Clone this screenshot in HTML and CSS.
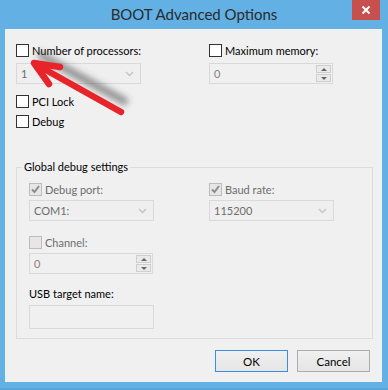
FILE: index.html
```html
<!DOCTYPE html>
<html lang="en">

<head>
    <meta charset="UTF-8">
    <meta name="viewport" content="width=device-width, initial-scale=1.0">
    <title>BOOT Advanced Options</title>
    <link rel="stylesheet" href="styles.css">
</head>

<body>
    <div class="window">
        <div class="titlebar">
            <span></span>
            <h1 class="title">BOOT Advanced Options</h1>
            <button class="close">
                <svg width="10" height="10" viewBox="0 0 10 10">
                    <path d="M1.5 1.5 L8.5 8.5 M8.5 1.5 L1.5 8.5" stroke="#fff" stroke-width="2" />
                </svg>
            </button>
        </div>

        <div class="client">
            <section class="top">
                <div class="col">
                    <label class="check"><span class="box"></span>Number of processors:</label>
                    <div class="combo"><span>1</span>
                        <svg class="chev" width="9" height="6" viewBox="0 0 9 6">
                            <path d="M1 1 L4.5 4.5 L8 1" fill="none" stroke="#c4c4c4" stroke-width="1.4" />
                        </svg>
                    </div>
                    <label class="check pci"><span class="box"></span>PCI Lock</label>
                    <label class="check debug"><span class="box"></span>Debug</label>
                </div>
                <div class="col">
                    <label class="check"><span class="box"></span>Maximum memory:</label>
                    <div class="spin"><span>0</span>
                        <div class="spin-btns">
                            <span class="spin-btn"><i class="tri up"></i></span>
                            <span class="spin-btn"><i class="tri down"></i></span>
                        </div>
                    </div>
                </div>
            </section>

            <fieldset class="group">
                <legend>Global debug settings</legend>
                <div class="group-grid">
                    <div class="col">
                        <label class="check off"><span class="box on">
                            <svg width="11" height="11" viewBox="0 0 11 11">
                                <path d="M2 5.5 L4.5 8 L9 2" fill="none" stroke="#8c8c8c" stroke-width="2" />
                            </svg></span>Debug port:</label>
                        <div class="combo"><span>COM1:</span>
                            <svg class="chev" width="9" height="6" viewBox="0 0 9 6">
                                <path d="M1 1 L4.5 4.5 L8 1" fill="none" stroke="#c4c4c4" stroke-width="1.4" />
                            </svg>
                        </div>
                        <label class="check off channel"><span class="box"></span>Channel:</label>
                        <div class="spin"><span>0</span>
                            <div class="spin-btns">
                                <span class="spin-btn"><i class="tri up"></i></span>
                                <span class="spin-btn"><i class="tri down"></i></span>
                            </div>
                        </div>
                        <div class="usb-label">USB target name:</div>
                        <div class="textbox"></div>
                    </div>
                    <div class="col">
                        <label class="check off"><span class="box on">
                            <svg width="11" height="11" viewBox="0 0 11 11">
                                <path d="M2 5.5 L4.5 8 L9 2" fill="none" stroke="#8c8c8c" stroke-width="2" />
                            </svg></span>Baud rate:</label>
                        <div class="combo"><span>115200</span>
                            <svg class="chev" width="9" height="6" viewBox="0 0 9 6">
                                <path d="M1 1 L4.5 4.5 L8 1" fill="none" stroke="#c4c4c4" stroke-width="1.4" />
                            </svg>
                        </div>
                    </div>
                </div>
            </fieldset>

            <div class="buttons">
                <button class="btn default">OK</button>
                <button class="btn">Cancel</button>
            </div>
        </div>

        <!-- annotation arrow drawn over the dialog -->
        <svg class="arrow" width="388" height="390" viewBox="0 0 388 390">
            <defs>
                <filter id="blur" x="-20%" y="-50%" width="140%" height="200%">
                    <feGaussianBlur stdDeviation="3" />
                </filter>
            </defs>
            <path d="M42 56 L124 101" stroke="rgba(70,70,70,0.55)" stroke-width="8" stroke-linecap="round" filter="url(#blur)" />
            <path d="M121 112 L37 65" stroke="#e8242b" stroke-width="6.5" stroke-linecap="round" />
            <path d="M60 67 L34 63 L49 84" fill="none" stroke="#e8242b" stroke-width="6.5" stroke-linecap="round" stroke-linejoin="round" />
        </svg>
    </div>
</body>

</html>
```

FILE: styles.css
```css
* {
    padding: 0;
    margin: 0;
    box-sizing: border-box;
}

body {
    background-color: #62b0e4;
    font-family: Lato, "Noto Sans", sans-serif;
    font-size: 11px;
    color: #000;
}

.window {
    position: relative;
    width: 388px;
    height: 390px;
    background-color: #62b0e4;
    border-bottom: 2px solid #58a5da;
}

.titlebar {
    height: 29px;
    display: grid;
    grid-template-columns: 1fr auto 1fr;
}

.title {
    font-size: 15px;
    font-weight: normal;
    color: #2b2b2b;
    line-height: 29px;
}

.close {
    justify-self: end;
    align-self: start;
    width: 28px;
    height: 20px;
    margin-right: 8px;
    border: none;
    background-color: #c7504f;
    display: flex;
    align-items: center;
    justify-content: center;
}

.client {
    margin: 0 6px 0 5px;
    height: 353px;
    background-color: #f0f0f0;
    padding: 15px 12px 0 11px;
}

.top {
    display: grid;
    grid-template-columns: 193px 1fr;
}

.col {
    display: flex;
    flex-direction: column;
    align-items: flex-start;
}

/* checkboxes */
.check {
    display: flex;
    align-items: center;
    gap: 3px;
    height: 13px;
    line-height: 13px;
    white-space: nowrap;
}

.box {
    width: 13px;
    height: 13px;
    border: 1px solid #333;
    background-color: #fff;
    display: flex;
    align-items: center;
    justify-content: center;
}

.check.off {
    color: #6d6d6d;
}

.check.off .box {
    border-color: #bcbcbc;
    background-color: #e6e6e6;
}

.pci {
    margin-top: 11px;
}

.debug {
    margin-top: 7px;
}

/* disabled combo boxes */
.combo {
    width: 125px;
    height: 21px;
    margin-top: 6px;
    border: 1px solid #d9d9d9;
    background-color: #efefef;
    color: #6d6d6d;
    display: flex;
    align-items: center;
    justify-content: space-between;
    padding: 0 6px 0 4px;
}

/* spin boxes */
.spin {
    width: 124px;
    height: 21px;
    margin-top: 6px;
    border: 1px solid #d9d9d9;
    background-color: #f0f0f0;
    color: #8b7d7d;
    display: flex;
    align-items: center;
    justify-content: space-between;
    padding-left: 4px;
}

.spin-btns {
    width: 16px;
    height: 100%;
    display: flex;
    flex-direction: column;
    gap: 1px;
    padding: 1px 1px 1px 0;
}

.spin-btn {
    flex: 1;
    border: 1px solid #cfcfcf;
    background-color: #eaeaea;
    display: flex;
    align-items: center;
    justify-content: center;
}

.tri {
    width: 0;
    height: 0;
    border-left: 3px solid transparent;
    border-right: 3px solid transparent;
}

.tri.up {
    border-bottom: 3px solid #666;
}

.tri.down {
    border-top: 3px solid #666;
}

/* group box */
.group {
    margin-top: 31px;
    width: 357px;
    border: 1px solid #dcdcdc;
    padding: 8px 12px 9px 12px;
}

.group legend {
    margin-left: -7px;
    padding: 0 2px;
    line-height: 16px;
}

.group-grid {
    display: grid;
    grid-template-columns: 180px 1fr;
}

.group .combo {
    margin-top: 4px;
}

.group .spin {
    margin-top: 4px;
}

.channel {
    margin-top: 15px;
}

.usb-label {
    margin-top: 12px;
    line-height: 16px;
}

.textbox {
    width: 125px;
    height: 24px;
    margin-top: 3px;
    border: 1px solid #d9d9d9;
    background-color: #f0f0f0;
}

/* dialog buttons */
.buttons {
    display: flex;
    justify-content: flex-end;
    gap: 9px;
    margin-top: 11px;
}

.btn {
    width: 73px;
    height: 22px;
    border: 1px solid #acacac;
    background: linear-gradient(#f0f0f0, #e5e5e5);
    font-family: inherit;
    font-size: 11.5px;
    color: #000;
}

.btn.default {
    border-color: #3c8fe0;
}

.arrow {
    position: absolute;
    left: 0;
    top: 0;
    pointer-events: none;
}
```
